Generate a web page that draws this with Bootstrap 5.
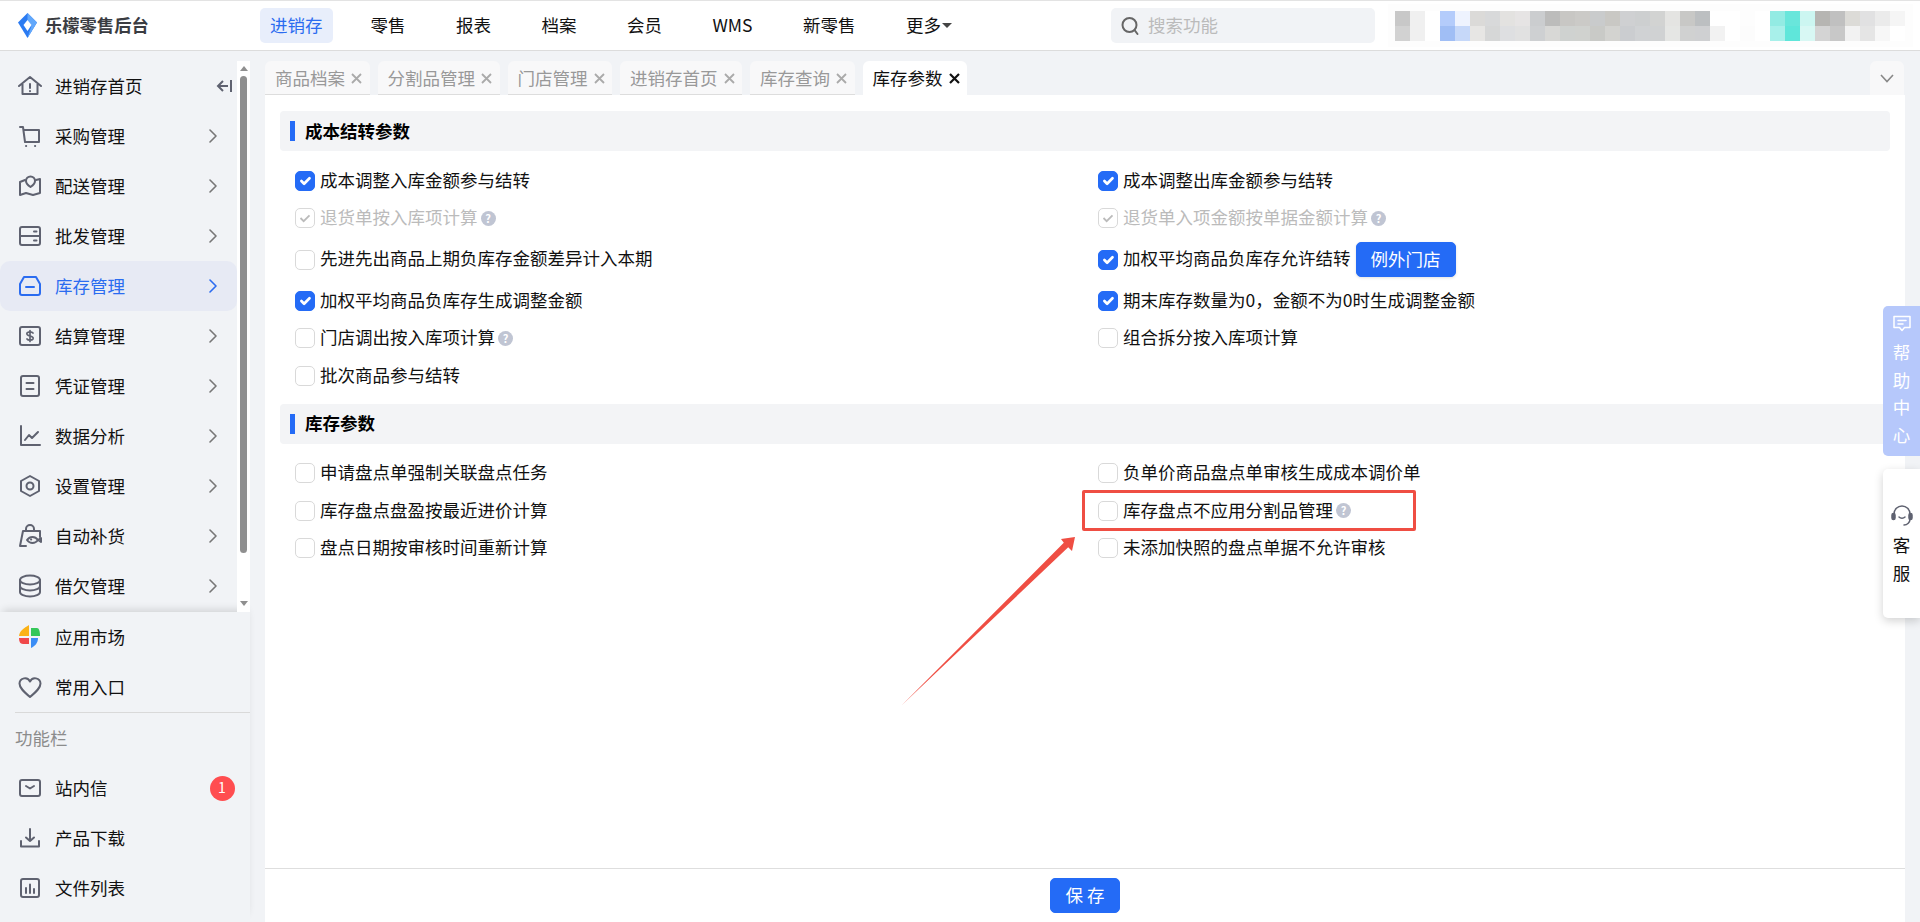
<!DOCTYPE html>
<html lang="zh-CN">
<head>
<meta charset="utf-8">
<title>库存参数</title>
<link href="https://cdn.jsdelivr.net/npm/bootstrap@5.3.0/dist/css/bootstrap.min.css" rel="stylesheet">
<style>
html,body{height:100%;overflow:hidden}
body{background:#f1f3f6;font-family:"Noto Sans CJK SC","Liberation Sans",sans-serif;font-size:17.5px;color:#111;line-height:1.4;position:relative}
svg{display:block;flex:none}
.ico{width:24px;height:24px;fill:none;stroke:#5f6270;stroke-width:2;stroke-linecap:round;stroke-linejoin:round}
.top-bar{height:51px;background:#fff;border-top:1px solid #e3e3e3;border-bottom:1px solid #dcdcdc}
.brand-box{width:260px;padding-left:18px;gap:8px;font-weight:700;color:#3a3c42;font-size:17.3px}
.top-nav{gap:29.5px}
.top-link{height:35px;padding:0 10.5px;border-radius:5px;color:#111;text-decoration:none}
.top-link.on{background:#e8eefb;color:#2b6cf0;margin-right:-2px;padding:0 10px}
.caret-mark{width:0;height:0;border-left:5px solid transparent;border-right:5px solid transparent;border-top:5px solid #444;margin-left:1px}
.search-box{width:264px;height:35px;background:#f1f3f6;border-radius:5px;padding-left:10px;gap:9px;color:#bbb;margin-right:13px}
.mosaic-box{width:525px;height:43px;padding:7px 0 0 7px;margin-right:7px;background:#fdfdfd}
.mosaic-grid{display:grid;grid-template-columns:repeat(34,15px);grid-auto-rows:15px}
.body-wrap{height:871px}
.side-col{width:265px}
.menu-wrap{height:561px}
.menu-list{width:237px;padding-top:10px;overflow:hidden}
.menu-row{height:50px;padding:0 20px 0 18px;gap:13px;border-radius:10px;color:#111}
.menu-row.on{background:#e7eaf4;color:#2b6cf0}
.menu-row.on .ico{stroke:#2b6cf0}
.menu-row.on .chev{stroke:#2b6cf0}
.chev{width:8px;height:14px;fill:none;stroke:#777;stroke-width:1.6;stroke-linecap:round;stroke-linejoin:round}
.fold-ico{width:16px;height:14px;fill:none;stroke:#5f6270;stroke-width:2;margin-right:-15px}
.track-col{width:13px;margin-top:10px;background:#fff;padding:0 3px;z-index:3;position:relative}
.track-thumb{height:477px;background:#8f8f8f;border-radius:4px;margin-top:5px}
.tri-up,.tri-down{width:0;height:0;border-left:4px solid transparent;border-right:4px solid transparent;margin:0 auto}
.tri-up{border-bottom:5px solid #8f8f8f;margin-top:5px}
.tri-down{border-top:5px solid #8f8f8f;margin-top:48px}
.side-foot{width:250px;box-shadow:0 -5px 8px -3px rgba(0,0,0,.14);position:relative;z-index:2}
.foot-rule{height:1px;background:#d9d9d9;margin-left:15px}
.foot-title{height:50px;padding-left:15px;color:#8c8c8c}
.dot-badge{width:25px;height:25px;border-radius:50%;background:#ff4d50;color:#fff;font-size:14px;margin-right:-4.5px}
.main-col{margin-right:15px;min-width:0}
.tab-strip{height:44px;padding-top:10px;gap:8px}
.tab-chip{height:34px;padding:2px 7.5px 0 10px;gap:6px;background:#f8f8f9;border-bottom:1px solid #ddd;border-radius:6px 6px 0 0;color:#999}
.tab-chip.on{background:#fff;border-bottom-color:#fff;color:#111}
.tab-x{width:11px;height:11px;fill:none;stroke:#aaa;stroke-width:1.8}
.tab-chip.on .tab-x{stroke:#111;stroke-width:2.2}
.more-chip{width:34px;height:34px;background:#f8f8f9;border-radius:6px 6px 0 0;margin-right:1px}
.panel-body{background:#fff;padding:16px 15px 0}
.sec-head{height:40px;background:#f3f4f6;border-radius:4px;padding-left:10px;gap:10px;font-weight:700;color:#000}
.sec-bar{width:5px;height:20px;background:#246bf6}
.opt-grid{display:grid;grid-template-columns:803px 1fr;padding-left:15px;margin:11px 0 9px}
.opt-item{min-height:37.5px;padding:5px 0;gap:5px}
.opt-item .form-check-input{width:20px;height:20px;margin:0;border:1px solid #d9d9d9;border-radius:5px;flex:none}
.opt-item .form-check-input:checked{background-color:#246bf6;border-color:#246bf6}
.opt-item .form-check-input:disabled{opacity:1;background-color:#fff;border-color:#d9d9d9;background-image:url("data:image/svg+xml,%3csvg xmlns='http://www.w3.org/2000/svg' viewBox='0 0 20 20'%3e%3cpath fill='none' stroke='%23bbb' stroke-width='2' d='m5 10 3.5 3.5 6.5-6.5'/%3e%3c/svg%3e")}
.opt-item.off{color:#bbb}
.opt-label{margin-top:-2px}
.q-mark{width:15px;height:15px;border-radius:50%;background:#c0c5d3;color:#fff;font-size:11px;font-weight:700;margin-left:-2px}
.side-btn{height:35px;width:100px;margin-left:0;padding:0;background:#246bf6;border-color:#246bf6;color:#fff;font-size:17.5px;border-radius:5px;box-shadow:0 1px 3px rgba(0,0,0,.12)}
.foot-bar{height:54px;background:#fff;border-top:1px solid #dedede;padding-top:9px}
.save-btn{width:70px;height:35px;padding:0;background:#246bf6;border-color:#246bf6;color:#fff;font-size:17.5px;border-radius:5px}
.float-tab{position:absolute;right:0;width:37px;border-radius:5px 0 0 5px;line-height:27.5px}
.float-help{top:306px;height:150px;background:#b6c8fb;color:#fff;padding-top:8px}
.float-kf{top:469px;height:149px;background:#fff;color:#111;box-shadow:0 3px 10px rgba(0,0,0,.18);padding-top:36px}
.mark-box{position:absolute;left:1082px;top:490px;width:334px;height:41px;border:3px solid #ef4e43;border-radius:2px;pointer-events:none}
.mark-arrow{position:absolute;left:0;top:0;width:1920px;height:922px;pointer-events:none}
</style>
</head>
<body>
<header class="top-bar d-flex align-items-center">
  <div class="brand-box d-flex align-items-center">
    <svg width="19" height="25" viewBox="0 0 19 25"><path d="M9.5 0 19 9.5 9.5 25 0 9.5Z" fill="#2b7bf2"/><path d="M9.5 0 19 9.5 9.5 25 13.5 12.5 9.5 7Z" fill="#62a8fb"/><path d="M9.5 7 13.5 12 9.5 18 5.5 12Z" fill="#fff"/></svg>
    <span>乐檬零售后台</span>
  </div>
  <nav class="top-nav d-flex align-items-center flex-grow-1">
    <a class="top-link on d-flex align-items-center" href="#">进销存</a>
    <a class="top-link d-flex align-items-center" href="#">零售</a>
    <a class="top-link d-flex align-items-center" href="#">报表</a>
    <a class="top-link d-flex align-items-center" href="#">档案</a>
    <a class="top-link d-flex align-items-center" href="#">会员</a>
    <a class="top-link d-flex align-items-center" href="#">WMS</a>
    <a class="top-link d-flex align-items-center" href="#">新零售</a>
    <a class="top-link d-flex align-items-center" href="#">更多<span class="caret-mark"></span></a>
  </nav>
  <div class="search-box d-flex align-items-center">
    <svg width="18" height="20" viewBox="0 0 18 20" fill="none" stroke="#666" stroke-width="2"><circle cx="8.5" cy="9" r="7"/><path d="m13.5 14 3 4" stroke-linecap="round"/></svg>
    <span>搜索功能</span>
  </div>
  <div class="mosaic-box"><div class="mosaic-grid" id="mosaic"></div></div>
</header>

<div class="body-wrap d-flex">
  <aside class="side-col d-flex flex-column">
    <div class="menu-wrap d-flex">
      <div class="menu-list">
        <div class="menu-row d-flex align-items-center">
          <svg class="ico" viewBox="0 0 24 24"><path d="M1 12 12 3l11 9M4.500 10v10h15V10M12 10v4M12 17v.2"/></svg>
          <span class="flex-grow-1">进销存首页</span>
          <svg class="fold-ico" viewBox="0 0 16 14"><path d="M7 2 2 7l5 5M2 7h10M15 1v12"/></svg>
        </div>
        <div class="menu-row d-flex align-items-center">
          <svg class="ico" viewBox="0 0 24 24"><path d="M2 3h3l2 15h14V6H6"/><path d="M8 22h.2M17 22h.2"/></svg>
          <span class="flex-grow-1">采购管理</span>
          <svg class="chev" viewBox="0 0 8 14"><path d="m1 1 6 6-6 6"/></svg>
        </div>
        <div class="menu-row d-flex align-items-center">
          <svg class="ico" viewBox="0 0 24 24"><path d="M7 6 2 8v13l6-2 7 2 7-2V5l-4 1"/><path d="M12.500 2.500a4.500 4.500 0 0 1 4.500 4.500c0 3-4.500 6-4.500 6S8 10 8 7a4.500 4.500 0 0 1 4.500-4.500Z"/></svg>
          <span class="flex-grow-1">配送管理</span>
          <svg class="chev" viewBox="0 0 8 14"><path d="m1 1 6 6-6 6"/></svg>
        </div>
        <div class="menu-row d-flex align-items-center">
          <svg class="ico" viewBox="0 0 24 24"><rect x="2" y="3" width="20" height="18" rx="2"/><path d="M2 12h20M16 7.500h2.500M16 16.500h2.500"/></svg>
          <span class="flex-grow-1">批发管理</span>
          <svg class="chev" viewBox="0 0 8 14"><path d="m1 1 6 6-6 6"/></svg>
        </div>
        <div class="menu-row on d-flex align-items-center">
          <svg class="ico" viewBox="0 0 24 24"><path d="M6 3h12l4 7v9a2 2 0 0 1-2 2H4a2 2 0 0 1-2-2v-9Z"/><path d="M8 13h8"/></svg>
          <span class="flex-grow-1">库存管理</span>
          <svg class="chev" viewBox="0 0 8 14"><path d="m1 1 6 6-6 6"/></svg>
        </div>
        <div class="menu-row d-flex align-items-center">
          <svg class="ico" viewBox="0 0 24 24"><rect x="2" y="3" width="20" height="18" rx="2"/><path stroke-width="1.700" d="M15 9c-1-1.500-5-1.500-6 0-.8 1.500 1 2.500 3 3s3.800 1.500 3 3c-1 1.500-5 1.500-6 0M12 6.500v11"/></svg>
          <span class="flex-grow-1">结算管理</span>
          <svg class="chev" viewBox="0 0 8 14"><path d="m1 1 6 6-6 6"/></svg>
        </div>
        <div class="menu-row d-flex align-items-center">
          <svg class="ico" viewBox="0 0 24 24"><rect x="3" y="2" width="18" height="20" rx="2"/><path d="M8.500 9h7M8.500 15h7"/></svg>
          <span class="flex-grow-1">凭证管理</span>
          <svg class="chev" viewBox="0 0 8 14"><path d="m1 1 6 6-6 6"/></svg>
        </div>
        <div class="menu-row d-flex align-items-center">
          <svg class="ico" viewBox="0 0 24 24"><path d="M3 2v19h19"/><path d="M7 16l4-5 3 3 6-6"/></svg>
          <span class="flex-grow-1">数据分析</span>
          <svg class="chev" viewBox="0 0 8 14"><path d="m1 1 6 6-6 6"/></svg>
        </div>
        <div class="menu-row d-flex align-items-center">
          <svg class="ico" viewBox="0 0 24 24"><path d="m12 2 9 5v10l-9 5-9-5V7Z"/><circle cx="12" cy="12" r="3.500"/></svg>
          <span class="flex-grow-1">设置管理</span>
          <svg class="chev" viewBox="0 0 8 14"><path d="m1 1 6 6-6 6"/></svg>
        </div>
        <div class="menu-row d-flex align-items-center">
          <svg class="ico" viewBox="0 0 24 24" stroke-width="1.800"><path d="M8 7V5a4 4 0 0 1 8 0v2"/><path d="M22 13V7H5L2 22h6"/><path d="M9 16c3-4 8-4 11 0-3 4-8 4-11 0ZM20 16l3-2v4Z"/><path d="M13 15.500h.2"/></svg>
          <span class="flex-grow-1">自动补货</span>
          <svg class="chev" viewBox="0 0 8 14"><path d="m1 1 6 6-6 6"/></svg>
        </div>
        <div class="menu-row d-flex align-items-center">
          <svg class="ico" viewBox="0 0 24 24"><ellipse cx="12" cy="6" rx="10" ry="4.500"/><path d="M2 6v12c0 2.500 4.500 4.500 10 4.500s10-2 10-4.500V6M2 12c0 2.500 4.500 4.500 10 4.500s10-2 10-4.500"/></svg>
          <span class="flex-grow-1">借欠管理</span>
          <svg class="chev" viewBox="0 0 8 14"><path d="m1 1 6 6-6 6"/></svg>
        </div>
      </div>
      <div class="track-col">
        <div class="tri-up"></div>
        <div class="track-thumb"></div>
        <div class="tri-down"></div>
      </div>
    </div>
    <div class="side-foot flex-grow-1">
      <div class="menu-row d-flex align-items-center">
        <svg width="24" height="24" viewBox="0 0 24 24"><path d="M11 11H1C1.500 6 6 3 11 0Z" fill="#fbb215"/><path d="M13 11V3h6c2 0 3 3 3 8Z" fill="#35c759"/><path d="M13 13h7c0 5-3 8-7 10Z" fill="#3b8df5"/><path d="M11 13v6H5c-3 0-4-3-4-6Z" fill="#f0484a"/></svg>
        <span>应用市场</span>
      </div>
      <div class="menu-row d-flex align-items-center">
        <svg class="ico" viewBox="0 0 24 24"><path d="M12 22C5 16 1.500 12.500 1.500 8.500a5.500 5.500 0 0 1 10.500-2 5.500 5.500 0 0 1 10.500 2c0 4-3.500 7.500-10.500 13.500Z"/></svg>
        <span>常用入口</span>
      </div>
      <div class="foot-rule"></div>
      <div class="foot-title d-flex align-items-center">功能栏</div>
      <div class="menu-row d-flex align-items-center">
        <svg class="ico" viewBox="0 0 24 24"><rect x="2" y="4" width="20" height="16" rx="2"/><path d="m8 10 4 2.500 4-2.500"/></svg>
        <span class="flex-grow-1">站内信</span>
        <span class="dot-badge d-flex align-items-center justify-content-center">1</span>
      </div>
      <div class="menu-row d-flex align-items-center">
        <svg class="ico" viewBox="0 0 24 24"><path d="M12 3v12M8 11.500l4 3.500 4-3.500M3 15v5.500h18V15"/></svg>
        <span>产品下载</span>
      </div>
      <div class="menu-row d-flex align-items-center">
        <svg class="ico" viewBox="0 0 24 24"><rect x="3" y="3" width="18" height="18" rx="2"/><path d="M8 12v5M12 8.500V17M16 13v4"/></svg>
        <span>文件列表</span>
      </div>
    </div>
  </aside>

  <main class="main-col flex-grow-1 d-flex flex-column">
    <div class="tab-strip d-flex">
      <div class="tab-chip d-flex align-items-center"><span>商品档案</span><svg class="tab-x" viewBox="0 0 11 11"><path d="m1 1 9 9M10 1l-9 9"/></svg></div>
      <div class="tab-chip d-flex align-items-center"><span>分割品管理</span><svg class="tab-x" viewBox="0 0 11 11"><path d="m1 1 9 9M10 1l-9 9"/></svg></div>
      <div class="tab-chip d-flex align-items-center"><span>门店管理</span><svg class="tab-x" viewBox="0 0 11 11"><path d="m1 1 9 9M10 1l-9 9"/></svg></div>
      <div class="tab-chip d-flex align-items-center"><span>进销存首页</span><svg class="tab-x" viewBox="0 0 11 11"><path d="m1 1 9 9M10 1l-9 9"/></svg></div>
      <div class="tab-chip d-flex align-items-center"><span>库存查询</span><svg class="tab-x" viewBox="0 0 11 11"><path d="m1 1 9 9M10 1l-9 9"/></svg></div>
      <div class="tab-chip on d-flex align-items-center"><span>库存参数</span><svg class="tab-x" viewBox="0 0 11 11"><path d="m1 1 9 9M10 1l-9 9"/></svg></div>
      <div class="more-chip ms-auto d-flex align-items-center justify-content-center"><svg width="14" height="9" viewBox="0 0 14 9" fill="none" stroke="#888" stroke-width="1.600"><path d="m1 1 6 6.500L13 1"/></svg></div>
    </div>
    <div class="panel-body flex-grow-1">
      <div class="sec-head d-flex align-items-center"><span class="sec-bar"></span><span>成本结转参数</span></div>
      <div class="opt-grid">
        <label class="opt-item d-flex align-items-center"><input class="form-check-input" type="checkbox" checked><span class="opt-label">成本调整入库金额参与结转</span></label>
        <label class="opt-item d-flex align-items-center"><input class="form-check-input" type="checkbox" checked><span class="opt-label">成本调整出库金额参与结转</span></label>
        <label class="opt-item off d-flex align-items-center"><input class="form-check-input" type="checkbox" checked disabled><span class="opt-label">退货单按入库项计算</span><span class="q-mark d-flex align-items-center justify-content-center">?</span></label>
        <label class="opt-item off d-flex align-items-center"><input class="form-check-input" type="checkbox" checked disabled><span class="opt-label">退货单入项金额按单据金额计算</span><span class="q-mark d-flex align-items-center justify-content-center">?</span></label>
        <label class="opt-item d-flex align-items-center"><input class="form-check-input" type="checkbox"><span class="opt-label">先进先出商品上期负库存金额差异计入本期</span></label>
        <div class="opt-item d-flex align-items-center"><input class="form-check-input" type="checkbox" checked><span class="opt-label">加权平均商品负库存允许结转</span><button class="btn side-btn" type="button">例外门店</button></div>
        <label class="opt-item d-flex align-items-center"><input class="form-check-input" type="checkbox" checked><span class="opt-label">加权平均商品负库存生成调整金额</span></label>
        <label class="opt-item d-flex align-items-center"><input class="form-check-input" type="checkbox" checked><span class="opt-label">期末库存数量为0，金额不为0时生成调整金额</span></label>
        <label class="opt-item d-flex align-items-center"><input class="form-check-input" type="checkbox"><span class="opt-label">门店调出按入库项计算</span><span class="q-mark d-flex align-items-center justify-content-center">?</span></label>
        <label class="opt-item d-flex align-items-center"><input class="form-check-input" type="checkbox"><span class="opt-label">组合拆分按入库项计算</span></label>
        <label class="opt-item d-flex align-items-center"><input class="form-check-input" type="checkbox"><span class="opt-label">批次商品参与结转</span></label>
      </div>
      <div class="sec-head d-flex align-items-center"><span class="sec-bar"></span><span>库存参数</span></div>
      <div class="opt-grid">
        <label class="opt-item d-flex align-items-center"><input class="form-check-input" type="checkbox"><span class="opt-label">申请盘点单强制关联盘点任务</span></label>
        <label class="opt-item d-flex align-items-center"><input class="form-check-input" type="checkbox"><span class="opt-label">负单价商品盘点单审核生成成本调价单</span></label>
        <label class="opt-item d-flex align-items-center"><input class="form-check-input" type="checkbox"><span class="opt-label">库存盘点盘盈按最近进价计算</span></label>
        <label class="opt-item d-flex align-items-center"><input class="form-check-input" type="checkbox"><span class="opt-label">库存盘点不应用分割品管理</span><span class="q-mark d-flex align-items-center justify-content-center">?</span></label>
        <label class="opt-item d-flex align-items-center"><input class="form-check-input" type="checkbox"><span class="opt-label">盘点日期按审核时间重新计算</span></label>
        <label class="opt-item d-flex align-items-center"><input class="form-check-input" type="checkbox"><span class="opt-label">未添加快照的盘点单据不允许审核</span></label>
      </div>
    </div>
    <div class="foot-bar d-flex justify-content-center align-items-start"><button class="btn save-btn" type="button">保 存</button></div>
  </main>
</div>

<div class="float-tab float-help d-flex flex-column align-items-center">
  <svg width="20" height="20" viewBox="0 0 20 20" fill="none" stroke="#fff" stroke-width="1.500" stroke-linejoin="round" stroke-linecap="round"><path d="M2 2.500h16v11h-5.500L10 16.500 7.500 13.500H2Z"/><path d="M6 6.500h8M6 10h5"/></svg>
  <span class="mt-1">帮</span><span>助</span><span>中</span><span>心</span>
</div>
<div class="float-tab float-kf d-flex flex-column align-items-center">
  <svg class="mb-1" width="22" height="22" viewBox="0 0 22 22" fill="none" stroke="#5f6270" stroke-width="1.500" stroke-linecap="round"><path d="M3 9a8 8 0 0 1 16 0v5a6 6 0 0 1-6 6"/><rect x="1" y="8.500" width="3" height="6" rx="1.500" fill="#5f6270"/><rect x="18" y="8.500" width="3" height="6" rx="1.500" fill="#5f6270"/><path d="M8 12c1.500 1.500 4.500 1.500 6 0"/></svg>
  <span>客</span><span>服</span>
</div>

<div class="mark-box"></div>
<svg class="mark-arrow" viewBox="0 0 1920 922"><polygon points="902,705 1063.800,542.700 1061,539 1075,537 1072,551 1068.200,547.300" fill="#ef4e43"/></svg>

<script src="https://cdn.jsdelivr.net/npm/bootstrap@5.3.0/dist/js/bootstrap.bundle.min.js"></script>
<script>
var rows=[
"c8c8c8 f0f0f0 ffffff b4ccfb eef3fe dbdad8 d8d9da e3e2e0 e6e4e4 cbcdcf bcbcbb c8c7c4 cbcac7 c9cbcc c9c8c4 cfd0d2 cdcfd0 d2d3d2 e4e4e2 c8c8c6 bcbfc1 ffffff ffffff fdfdfd ffffff 93ebe3 69e6db ccf6f1 b6b5b2 c0c0c0 dcdbd7 e1e1e2 ebebeb f5f5f5",
"d2d2d2 f0f0f0 ffffff a0bef5 c6d8f9 e7e6e4 d6d7d7 dedfe1 e1e1e1 ced0d2 d8d8d6 cfd2d0 d0d2cf c9cac7 d3d3d0 cbcdd0 d0d2d4 d0d2d3 e5e6e4 d0d1d1 cfd0d2 f2f2f2 ffffff fcfcfc ffffff a8f0ea 5fe6da d8f8f4 d4d4d4 c8c8c8 f2f2f2 e5e5e5 f7f7f7 ffffff"];
var m=document.getElementById('mosaic');
rows.forEach(function(r){r.split(' ').forEach(function(c){var s=document.createElement('span');s.style.background='#'+c;m.appendChild(s);});});
</script>
</body>
</html>
